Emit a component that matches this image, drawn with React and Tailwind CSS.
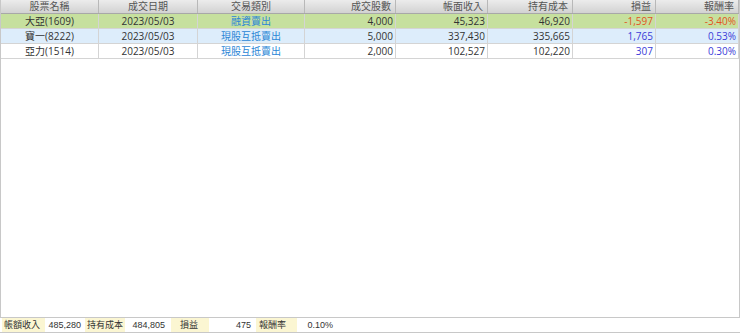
import React from "react";

const cols = "grid-cols-[98px_99px_107px_91px_92px_85px_83px_83px]";

const rows = [
  { name: "大亞(1609)", date: "2023/05/03", type: "融資賣出", qty: "4,000", income: "45,323", cost: "46,920", pl: "-1,597", rate: "-3.40%", bg: "bg-[#c6e09e]", neg: true },
  { name: "寶一(8222)", date: "2023/05/03", type: "現股互抵賣出", qty: "5,000", income: "337,430", cost: "335,665", pl: "1,765", rate: "0.53%", bg: "bg-[#ddedfb]", neg: false },
  { name: "亞力(1514)", date: "2023/05/03", type: "現股互抵賣出", qty: "2,000", income: "102,527", cost: "102,220", pl: "307", rate: "0.30%", bg: "bg-white", neg: false },
];

const heads = ["股票名稱", "成交日期", "交易類別", "成交股數", "帳面收入", "持有成本", "損益", "報酬率"];

function App() {
  return (
    <div className="w-[740px] h-[335px] bg-white text-[10px] text-[#333] font-['Open_Sans','Noto_Sans_CJK_TC',sans-serif] flex flex-col overflow-hidden">
      <div className="h-[318px] border-l border-r border-b border-[#c8c8c8] flex flex-col">
        <div className={`grid ${cols} h-[14px] bg-gradient-to-b from-[#ececec] to-[#d2d2d2] border-b border-[#a8a8a8] text-[#555] leading-[13px]`}>
          {heads.map((h, i) => (
            <div key={h} className={`border-r border-[#b8b8b8] px-1 ${i < 3 ? "text-center" : "text-right"}`}>{h}</div>
          ))}
        </div>
        {rows.map((r) => (
          <div key={r.name} className={`grid ${cols} h-[15px] leading-[14px] border-b border-[#d4d4d4] ${r.bg}`}>
            <div className="border-r border-[#d4d4d4] text-center">{r.name}</div>
            <div className="border-r border-[#d4d4d4] text-center">{r.date}</div>
            <div className="border-r border-[#d4d4d4] text-center text-[#2b86d6]">{r.type}</div>
            <div className="border-r border-[#d4d4d4] text-right pr-[2px]">{r.qty}</div>
            <div className="border-r border-[#d4d4d4] text-right pr-[2px]">{r.income}</div>
            <div className="border-r border-[#d4d4d4] text-right pr-[2px]">{r.cost}</div>
            <div className={`border-r border-[#d4d4d4] text-right pr-[2px] ${r.neg ? "text-[#e2541f]" : "text-[#3b3bd8]"}`}>{r.pl}</div>
            <div className={`border-r border-[#d4d4d4] text-right pr-[2px] ${r.neg ? "text-[#e2541f]" : "text-[#3b3bd8]"}`}>{r.rate}</div>
          </div>
        ))}
      </div>
      <div className="h-[15px] flex items-center border-b border-[#c8c8c8] text-[9px] text-[#333] font-['Liberation_Sans','Noto_Sans_CJK_TC',sans-serif] leading-[14px]">
        <div className="w-[43px] ml-[2px] bg-[#fbf6d2] pl-[2px]">帳額收入</div>
        <div className="w-[36px] text-right">485,280</div>
        <div className="w-[40px] ml-[4px] bg-[#fbf6d2] pl-[2px]">持有成本</div>
        <div className="w-[40px] text-right">484,805</div>
        <div className="w-[38px] ml-[6px] bg-[#fbf6d2] pl-[9px]">損益</div>
        <div className="w-[42px] text-right">475</div>
        <div className="w-[41px] ml-[5px] bg-[#fbf6d2] pl-[3px]">報酬率</div>
        <div className="w-[36px] text-right">0.10%</div>
      </div>
    </div>
  );
}

export default App;
